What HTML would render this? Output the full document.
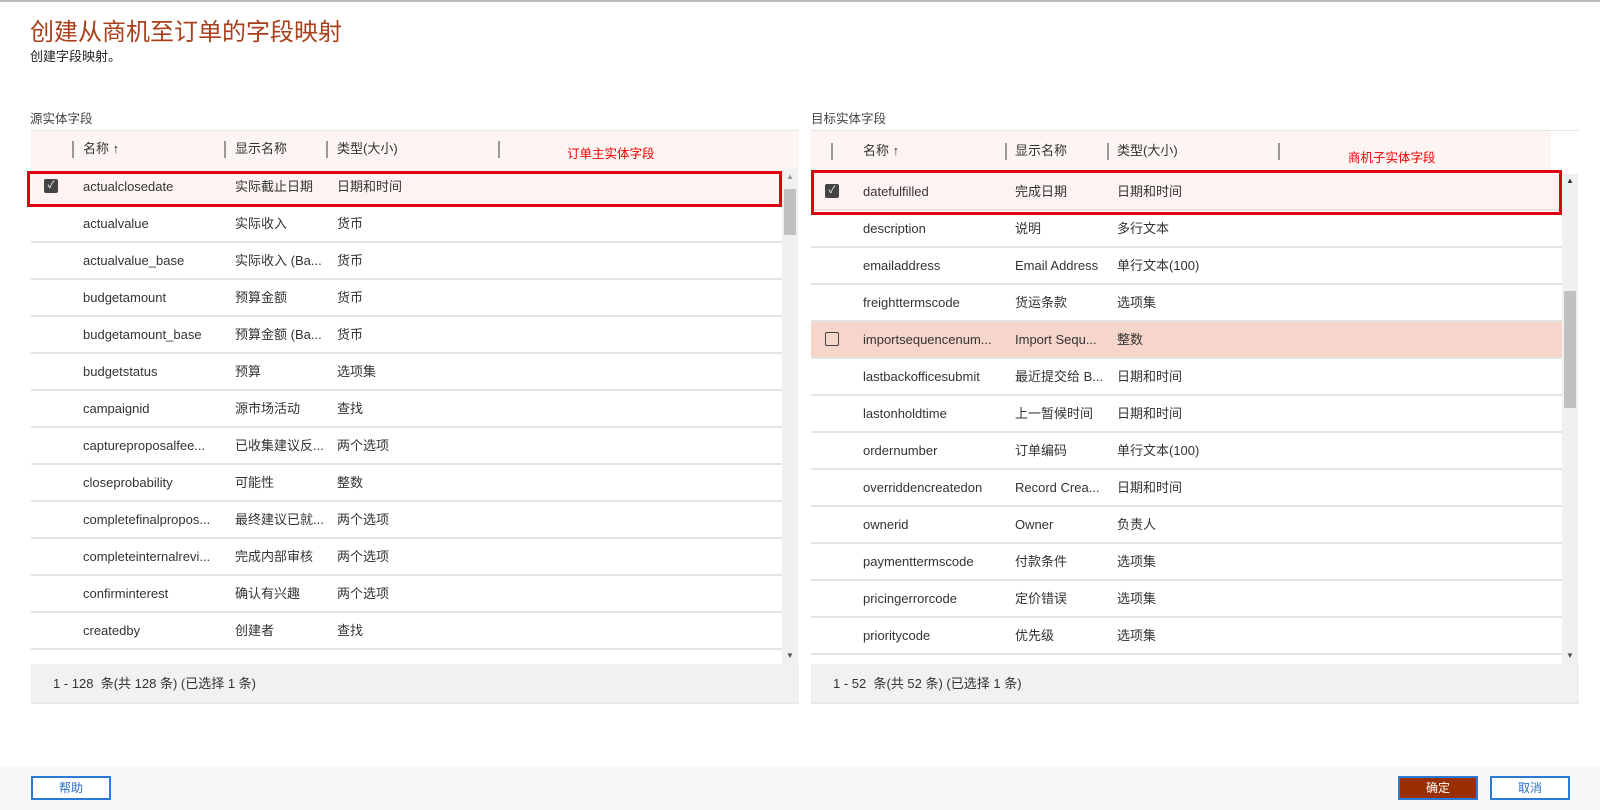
<!DOCTYPE html>
<html><head><meta charset="utf-8"><style>
*{margin:0;padding:0;box-sizing:border-box}
body{width:1600px;height:810px;overflow:hidden;background:#fff;font-family:"Liberation Sans","Noto Sans CJK SC",sans-serif;color:#333;font-size:13px;position:relative}
.a{position:absolute;white-space:nowrap}
.tbl{position:absolute;top:130px;border-top:1px solid #e6e6e6}
.hdr{position:absolute;left:0;top:0;height:40px;background:#fcf5f2}
.sep{position:absolute;top:10px;width:2px;height:17px;background:#999}
.row{position:absolute;left:0;height:37px;border-bottom:2px solid #e4e4e4}
.row span{position:absolute;top:0;line-height:35px;height:35px}
.cb{position:absolute;width:14px;height:14px;border-radius:2px}
.foot{position:absolute;height:40px;background:#f1f1f1;border-bottom:2px solid #e8e8e8}
.sb{position:absolute;background:#f0f0f0}
.btn{position:absolute;top:776px;height:24px;width:80px;border:2px solid #2a7ad6;background:#fff;color:#2a6fc9;text-align:center;line-height:20px;font-size:12px}
.hd{position:absolute;line-height:20px}
</style></head><body>
<div class="a" style="left:0;top:0;width:1600px;height:2px;background:#bbb"></div>
<div class="a" style="left:30px;top:12px;font-size:24px;color:#a8401b">创建从商机至订单的字段映射</div>
<div class="a" style="left:30px;top:46px;font-size:13px;color:#222">创建字段映射。</div>
<div class="a" style="left:30px;top:108px;font-size:12.5px;color:#444">源实体字段</div>
<div class="a" style="left:811px;top:108px;font-size:12.5px;color:#444">目标实体字段</div>

<!-- LEFT -->
<div class="tbl" style="left:31px;width:768px;height:534px">
 <div class="hdr" style="width:768px"></div>
 <div class="sep" style="left:41px"></div><div class="sep" style="left:193px"></div><div class="sep" style="left:295px"></div><div class="sep" style="left:467px"></div>
 <div class="hd" style="left:52px;top:8px">名称 ↑</div>
 <div class="hd" style="left:204px;top:8px">显示名称</div>
 <div class="hd" style="left:306px;top:8px">类型(大小)</div>
 <div class="hd" style="left:536px;top:13px;color:#e00;font-size:12.5px">订单主实体字段</div>
</div>
<div class="a" style="left:31px;top:169px;width:751px;height:495px;overflow:hidden">
 <div class="row" style="top:0;width:751px;background:#fdf4f2"><div class="cb" style="left:13px;top:10px;background:#444;color:#fff;font-size:10px;line-height:14px;text-align:center">✓</div><span style="left:52px">actualclosedate</span><span style="left:204px">实际截止日期</span><span style="left:306px">日期和时间</span></div>
 <div class="row" style="top:37px;width:751px"><span style="left:52px">actualvalue</span><span style="left:204px">实际收入</span><span style="left:306px">货币</span></div>
 <div class="row" style="top:74px;width:751px"><span style="left:52px">actualvalue_base</span><span style="left:204px">实际收入 (Ba...</span><span style="left:306px">货币</span></div>
 <div class="row" style="top:111px;width:751px"><span style="left:52px">budgetamount</span><span style="left:204px">预算金额</span><span style="left:306px">货币</span></div>
 <div class="row" style="top:148px;width:751px"><span style="left:52px">budgetamount_base</span><span style="left:204px">预算金额 (Ba...</span><span style="left:306px">货币</span></div>
 <div class="row" style="top:185px;width:751px"><span style="left:52px">budgetstatus</span><span style="left:204px">预算</span><span style="left:306px">选项集</span></div>
 <div class="row" style="top:222px;width:751px"><span style="left:52px">campaignid</span><span style="left:204px">源市场活动</span><span style="left:306px">查找</span></div>
 <div class="row" style="top:259px;width:751px"><span style="left:52px">captureproposalfee...</span><span style="left:204px">已收集建议反...</span><span style="left:306px">两个选项</span></div>
 <div class="row" style="top:296px;width:751px"><span style="left:52px">closeprobability</span><span style="left:204px">可能性</span><span style="left:306px">整数</span></div>
 <div class="row" style="top:333px;width:751px"><span style="left:52px">completefinalpropos...</span><span style="left:204px">最终建议已就...</span><span style="left:306px">两个选项</span></div>
 <div class="row" style="top:370px;width:751px"><span style="left:52px">completeinternalrevi...</span><span style="left:204px">完成内部审核</span><span style="left:306px">两个选项</span></div>
 <div class="row" style="top:407px;width:751px"><span style="left:52px">confirminterest</span><span style="left:204px">确认有兴趣</span><span style="left:306px">两个选项</span></div>
 <div class="row" style="top:444px;width:751px"><span style="left:52px">createdby</span><span style="left:204px">创建者</span><span style="left:306px">查找</span></div>
</div>
<div class="sb" style="left:782px;top:169px;width:16px;height:495px"></div>
<div class="a" style="left:784px;top:189px;width:12px;height:46px;background:#c1c1c1"></div>
<div class="a" style="left:786px;top:172px;font-size:8px;color:#999">▲</div>
<div class="a" style="left:786px;top:651px;font-size:8px;color:#555">▼</div>
<div class="a" style="left:27px;top:171px;width:755px;height:36px;border:3px solid #e0000f"></div>
<div class="foot" style="left:31px;top:664px;width:768px"></div>
<div class="a" style="left:53px;top:673px;font-size:13px">1 - 128&nbsp; 条(共 128 条) (已选择 1 条)</div>

<!-- RIGHT -->
<div class="tbl" style="left:811px;width:768px;height:534px">
 <div class="hdr" style="width:740px;height:43px"></div>
 <div class="sep" style="left:20px;top:12px"></div><div class="sep" style="left:194px;top:12px"></div><div class="sep" style="left:296px;top:12px"></div><div class="sep" style="left:467px;top:12px"></div>
 <div class="hd" style="left:52px;top:10px">名称 ↑</div>
 <div class="hd" style="left:204px;top:10px">显示名称</div>
 <div class="hd" style="left:306px;top:10px">类型(大小)</div>
 <div class="hd" style="left:537px;top:17px;color:#e00;font-size:12.5px">商机子实体字段</div>
</div>
<div class="a" style="left:811px;top:174px;width:751px;height:490px;overflow:hidden">
 <div class="row" style="top:0;width:751px;background:#fdf4f2"><div class="cb" style="left:14px;top:10px;background:#444;color:#fff;font-size:10px;line-height:14px;text-align:center">✓</div><span style="left:52px">datefulfilled</span><span style="left:204px">完成日期</span><span style="left:306px">日期和时间</span></div>
 <div class="row" style="top:37px;width:751px"><span style="left:52px">description</span><span style="left:204px">说明</span><span style="left:306px">多行文本</span></div>
 <div class="row" style="top:74px;width:751px"><span style="left:52px">emailaddress</span><span style="left:204px">Email Address</span><span style="left:306px">单行文本(100)</span></div>
 <div class="row" style="top:111px;width:751px"><span style="left:52px">freighttermscode</span><span style="left:204px">货运条款</span><span style="left:306px">选项集</span></div>
 <div class="row" style="top:148px;width:751px;background:#f6d5ca"><div class="cb" style="left:14px;top:10px;border:1.5px solid #444"></div><span style="left:52px">importsequencenum...</span><span style="left:204px">Import Sequ...</span><span style="left:306px">整数</span></div>
 <div class="row" style="top:185px;width:751px"><span style="left:52px">lastbackofficesubmit</span><span style="left:204px">最近提交给 B...</span><span style="left:306px">日期和时间</span></div>
 <div class="row" style="top:222px;width:751px"><span style="left:52px">lastonholdtime</span><span style="left:204px">上一暂候时间</span><span style="left:306px">日期和时间</span></div>
 <div class="row" style="top:259px;width:751px"><span style="left:52px">ordernumber</span><span style="left:204px">订单编码</span><span style="left:306px">单行文本(100)</span></div>
 <div class="row" style="top:296px;width:751px"><span style="left:52px">overriddencreatedon</span><span style="left:204px">Record Crea...</span><span style="left:306px">日期和时间</span></div>
 <div class="row" style="top:333px;width:751px"><span style="left:52px">ownerid</span><span style="left:204px">Owner</span><span style="left:306px">负责人</span></div>
 <div class="row" style="top:370px;width:751px"><span style="left:52px">paymenttermscode</span><span style="left:204px">付款条件</span><span style="left:306px">选项集</span></div>
 <div class="row" style="top:407px;width:751px"><span style="left:52px">pricingerrorcode</span><span style="left:204px">定价错误</span><span style="left:306px">选项集</span></div>
 <div class="row" style="top:444px;width:751px"><span style="left:52px">prioritycode</span><span style="left:204px">优先级</span><span style="left:306px">选项集</span></div>
</div>
<div class="sb" style="left:1562px;top:174px;width:16px;height:490px"></div>
<div class="a" style="left:1564px;top:291px;width:12px;height:117px;background:#c1c1c1"></div>
<div class="a" style="left:1566px;top:176px;font-size:8px;color:#333">▲</div>
<div class="a" style="left:1566px;top:651px;font-size:8px;color:#555">▼</div>
<div class="a" style="left:811px;top:170px;width:751px;height:45px;border:3px solid #e0000f"></div>
<div class="foot" style="left:811px;top:664px;width:768px"></div>
<div class="a" style="left:833px;top:673px;font-size:13px">1 - 52&nbsp; 条(共 52 条) (已选择 1 条)</div>

<!-- bottom -->
<div class="a" style="left:0;top:766px;width:1600px;height:44px;background:#f7f7f7"></div>
<div class="btn" style="left:31px">帮助</div>
<div class="btn" style="left:1398px;background:#992e00;color:#fff">确定</div>
<div class="btn" style="left:1490px">取消</div>
</body></html>
